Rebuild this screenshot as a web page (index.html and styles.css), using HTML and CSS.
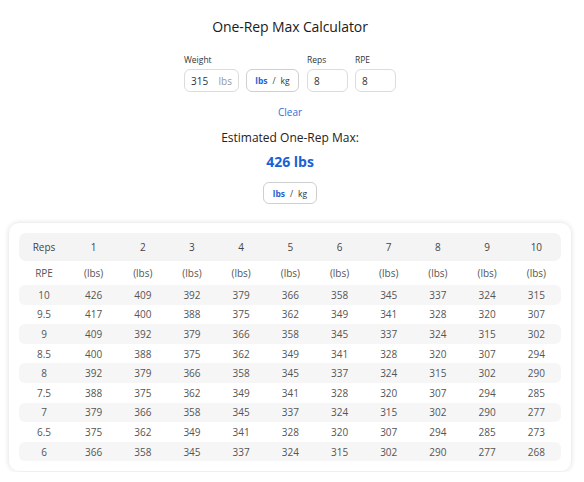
FILE: index.html
```html
<!DOCTYPE html>
<html>
<head>
<meta charset="utf-8">
<link rel="stylesheet" href="styles.css">
</head>
<body>
<div class="page">
  <h1 class="title">One-Rep Max Calculator</h1>
  <div class="form">
    <div class="field">
      <label class="label">Weight</label>
      <div class="row">
        <div class="input weight"><span class="val">315</span><span class="unit">lbs</span></div>
        <div class="toggle"><b>lbs</b><span class="slash">/</span><span class="kg">kg</span></div>
      </div>
    </div>
    <div class="field">
      <label class="label">Reps</label>
      <div class="input small"><span class="val">8</span></div>
    </div>
    <div class="field">
      <label class="label">RPE</label>
      <div class="input small"><span class="val">8</span></div>
    </div>
  </div>
  <div class="clear">Clear</div>
  <div class="est">Estimated One-Rep Max:</div>
  <div class="result">426 lbs</div>
  <div class="toggle center"><b>lbs</b><span class="slash">/</span><span class="kg">kg</span></div>

  <div class="card">
    <table class="tbl">
      <thead>
        <tr class="head"><th>Reps</th><th>1</th><th>2</th><th>3</th><th>4</th><th>5</th><th>6</th><th>7</th><th>8</th><th>9</th><th>10</th></tr>
      </thead>
      <tbody>
        <tr class="sub"><td>RPE</td><td>(lbs)</td><td>(lbs)</td><td>(lbs)</td><td>(lbs)</td><td>(lbs)</td><td>(lbs)</td><td>(lbs)</td><td>(lbs)</td><td>(lbs)</td><td>(lbs)</td></tr>
        <tr class="s"><td>10</td><td>426</td><td>409</td><td>392</td><td>379</td><td>366</td><td>358</td><td>345</td><td>337</td><td>324</td><td>315</td></tr>
        <tr><td>9.5</td><td>417</td><td>400</td><td>388</td><td>375</td><td>362</td><td>349</td><td>341</td><td>328</td><td>320</td><td>307</td></tr>
        <tr class="s"><td>9</td><td>409</td><td>392</td><td>379</td><td>366</td><td>358</td><td>345</td><td>337</td><td>324</td><td>315</td><td>302</td></tr>
        <tr><td>8.5</td><td>400</td><td>388</td><td>375</td><td>362</td><td>349</td><td>341</td><td>328</td><td>320</td><td>307</td><td>294</td></tr>
        <tr class="s"><td>8</td><td>392</td><td>379</td><td>366</td><td>358</td><td>345</td><td>337</td><td>324</td><td>315</td><td>302</td><td>290</td></tr>
        <tr><td>7.5</td><td>388</td><td>375</td><td>362</td><td>349</td><td>341</td><td>328</td><td>320</td><td>307</td><td>294</td><td>285</td></tr>
        <tr class="s"><td>7</td><td>379</td><td>366</td><td>358</td><td>345</td><td>337</td><td>324</td><td>315</td><td>302</td><td>290</td><td>277</td></tr>
        <tr><td>6.5</td><td>375</td><td>362</td><td>349</td><td>341</td><td>328</td><td>320</td><td>307</td><td>294</td><td>285</td><td>273</td></tr>
        <tr class="s"><td>6</td><td>366</td><td>358</td><td>345</td><td>337</td><td>324</td><td>315</td><td>302</td><td>290</td><td>277</td><td>268</td></tr>
      </tbody>
    </table>
  </div>
</div>
</body>
</html>
```

FILE: styles.css
```css
* { box-sizing: border-box; }
html, body { margin: 0; padding: 0; background: #fff; }
body {
  font-family: "Open Sans", "Noto Sans", sans-serif;
  color: #222;
}
.page {
  display: flex;
  flex-direction: column;
  align-items: center;
  padding: 16px 12px 0 8px;
}
.title {
  margin: 0;
  font-size: 14px;
  letter-spacing: -0.1px;
  font-weight: 400;
  line-height: 22px;
  color: #1a1a1a;
}
.form {
  display: flex;
  gap: 7px;
  margin-top: 16px;
}
.field { display: flex; flex-direction: column; }
.label {
  font-size: 8.5px;
  line-height: 12px;
  color: #333;
  margin-bottom: 3px;
}
.row { display: flex; gap: 7px; margin-right: 1px; }
.input {
  height: 23px;
  border: 1px solid #dcdcdc;
  border-radius: 6px;
  display: flex;
  align-items: center;
  padding: 0 6px;
  font-size: 10px;
  color: #333;
}
.input.weight { width: 55px; justify-content: space-between; }
.input.small { width: 41px; }
.unit { color: #999; }
.toggle {
  height: 23px;
  width: 53px;
  border: 1px solid #cfcfcf;
  border-radius: 6px;
  display: flex;
  align-items: center;
  justify-content: center;
  font-size: 8.5px;
  color: #333;
}
.toggle b { color: #1f63d0; font-weight: 700; }
.slash { margin: 0 5px; color: #444; }
.toggle.center { margin-top: 10px; height: 22px; width: 54px; }
.clear {
  margin-top: 13px;
  font-size: 10px;
  line-height: 14px;
  color: #2f6fd6;
}
.est {
  margin-top: 10px;
  font-size: 12px;
  line-height: 18px;
  color: #222;
}
.result {
  margin-top: 5px;
  font-size: 14px;
  line-height: 20px;
  font-weight: 700;
  color: #1a62d2;
}
.card {
  align-self: stretch;
  margin-top: 18px;
  border-radius: 11px;
  box-shadow: 0 0 4px rgba(0,0,0,0.10);
  border: 1px solid #f0f0f0;
  padding: 10px 10px 10px 10px;
}
.tbl {
  width: 100%;
  border-collapse: separate;
  border-spacing: 0;
  table-layout: fixed;
  font-size: 10px;
  color: #555;
  text-align: center;
}
.tbl th {
  font-weight: 400;
  color: #444;
  height: 28px;
  background: #f4f4f4;
  padding: 0;
}
.tbl th:first-child { border-radius: 7px 0 0 7px; width: 50px; }
.tbl th:last-child { border-radius: 0 7px 7px 0; }
.tbl td { height: 19.6px; padding: 0; }
.tbl tr.sub td { height: 24px; }
.tbl tr.s td { background: #f6f6f6; }
.tbl tr.s td:first-child { border-radius: 6px 0 0 6px; }
.tbl tr.s td:last-child { border-radius: 0 6px 6px 0; }
```
